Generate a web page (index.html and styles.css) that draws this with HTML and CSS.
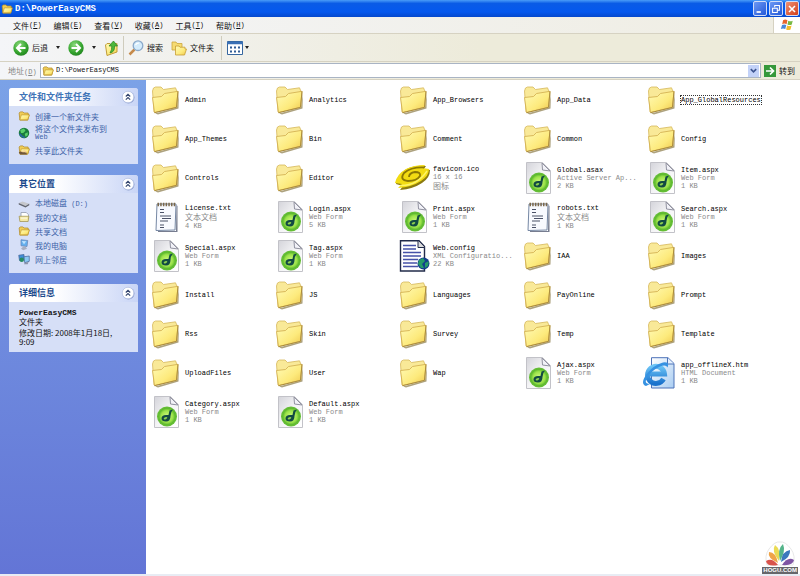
FILE: index.html
```
<!DOCTYPE html>
<html lang="zh-CN">
<head>
<meta charset="utf-8">
<title>D:\PowerEasyCMS</title>
<link rel="stylesheet" href="styles.css">
</head>
<body>
<svg class="defs" aria-hidden="true">
  <defs>
    <linearGradient id="gFold" x1="0" y1="0" x2="1" y2="1"><stop offset="0" stop-color="#fffbb8"/><stop offset=".6" stop-color="#fdea7c"/><stop offset="1" stop-color="#eec64b"/></linearGradient>
    <radialGradient id="gGreen" cx=".4" cy=".3" r=".8"><stop offset="0" stop-color="#8bd97c"/><stop offset=".6" stop-color="#35a52e"/><stop offset="1" stop-color="#1c7a1c"/></radialGradient>
    <radialGradient id="gLime"><stop offset="0" stop-color="#d2fa7e"/><stop offset=".7" stop-color="#9be34a"/><stop offset="1" stop-color="#58b52c"/></radialGradient>
    <linearGradient id="gPage" x1="0" y1="0" x2="1" y2="1"><stop offset="0" stop-color="#d4d4da"/><stop offset=".5" stop-color="#f4f4f6"/><stop offset="1" stop-color="#fff"/></linearGradient>
    <linearGradient id="gIe" x1="0" y1="0" x2="0" y2="1"><stop offset="0" stop-color="#6cc4f6"/><stop offset="1" stop-color="#1a72cc"/></linearGradient>
    <linearGradient id="gDoc" x1="0" y1="0" x2="1" y2="1"><stop offset="0" stop-color="#fff"/><stop offset="1" stop-color="#a9cdf2"/></linearGradient>
  </defs>
  <symbol id="folder" viewBox="0 0 32 32">
    <path d="M5 29.500L27 23.500L29 8L28.500 24.500L8 30.500Z" fill="#8a7a48" opacity=".7"/>
    <path d="M2.500 7L3.500 4L5.500 3H11L13.500 5.500L25.500 3.800L27 7.500V22L4 28Z" fill="#f9e998" stroke="#d6b75c" stroke-width=".8"/>
    <path d="M2.500 13.500L11.500 12.500L14.500 9.500L28 7.300L26.500 23.200L4.500 28.500Z" fill="url(#gFold)" stroke="#cfab4a" stroke-width=".8"/>
    <path d="M4.500 28.700L26.500 23.400L28 7.300" fill="none" stroke="#ab8c3c"/>
  </symbol>
  <symbol id="web" viewBox="0 0 32 32">
    <path d="M4.500 .5H20.500L28.500 8.500V31.500H4.500Z" fill="url(#gPage)" stroke="#c2c2c8"/>
    <path d="M20 1L28 9L20.500 8Z" fill="#f2f2f8" stroke="#9192a0"/>
    <circle cx="17" cy="20.500" r="10" fill="#64bd35"/>
    <circle cx="17" cy="20.500" r="8.400" fill="url(#gLime)"/>
    <path d="M19.500 14.500L23 13.500Q20.500 16 20.500 20Q20.500 25.500 16 25.500Q11.500 25.500 11.500 22.500Q11.500 19 16 19H18.500Z" fill="#124a43"/>
    <ellipse cx="15.500" cy="22.200" rx="1.900" ry="1" fill="#8ed24f" transform="rotate(-20 15.500 22.200)"/>
  </symbol>
  <symbol id="text" viewBox="0 0 32 32">
    <path d="M8 30H26L26.500 4L27.500 5V31H8Z" fill="#777d90"/>
    <path d="M7 3H26L25 29L6 29.500Z" fill="#f8faff" stroke="#7688a4"/>
    <path d="M7.500 3.500H26" stroke="#7b684a" stroke-width="3.500" stroke-dasharray="1.500 1.200"/>
    <path d="M10 8.500H14M10 11.500H14M10 15H21M12 17.500H21M10 20H18M10 24H14M10 26.500H14" stroke="#4b5268" stroke-width="1.200"/>
  </symbol>
  <symbol id="config" viewBox="0 0 32 32">
    <path d="M2.500 .8H21L26.500 6.500V31H2.500Z" fill="#fff" stroke="#222b4a" stroke-width="1.400"/>
    <path d="M20 1V7.500H26.500" fill="#ddd" stroke="#222b4a"/>
    <path d="M5 5.500H18M5 9H18M5 12.500H23M5 16H23M5 19.500H20M5 23H19M5 26.500H20" stroke="#4652a8" stroke-width="1.500"/>
    <circle cx="25.500" cy="23.500" r="6" fill="#123f8d"/>
    <path d="M21 20L25 18L27 21L24 24L26 28L23 28L20 24ZM27 23L31 21L30 26L27 28Z" fill="#259a67"/>
  </symbol>
  <symbol id="ico" viewBox="0 0 36 28">
    <path d="M2 20Q3 12 11 6Q20 1 32 2L30 5L36 6Q36 14 28 19Q19 25 6 26L9 22Z" fill="#8b7a10"/>
    <path d="M1 19Q3 10 12 5Q20 1 31 1L29 4L35 5Q35 12 27 17Q18 23 4 24L8 20Z" fill="#f2dc13"/>
    <path d="M30 3.500Q17 3 10 9Q5 16 14 17Q23 17 26 12Q27 8 21 8Q15 9 15 13" fill="none" stroke="#8b7805" stroke-width="1.800"/>
    <path d="M6 21.500Q23 22 33 7" fill="none" stroke="#fff568" stroke-width="1.400"/>
  </symbol>
  <symbol id="ie" viewBox="0 0 36 32">
    <path d="M9.500 .7H26L32 6.500V31H9.500Z" fill="url(#gDoc)" stroke="#4d72b8"/>
    <path d="M25.500 1V7H32" fill="#e5f1ff" stroke="#4d72b8"/>
    <path d="M21.500 22A8.500 8.500 0 1 1 22.500 17H7" fill="none" stroke="url(#gIe)" stroke-width="5"/>
    <path d="M4 29Q-2 27 4 18Q11 8 21 5.500Q28 4.500 25.500 10.500Q24 7 18 9.500Q9 13.500 4.500 22Q2 27 8 27Z" fill="#3692e2"/>
  </symbol>
  <symbol id="smallfolder" viewBox="0 0 16 16">
    <path d="M1.500 4L3 2.500H6.500L8 4H13.500V6L15 6.500L13 13.500H2.500Z" fill="#f0cd56" stroke="#b18b29"/>
    <path d="M2.500 13L4.500 6.500H15L13 13Z" fill="url(#gFold)" stroke="#bd962e" stroke-width=".8"/>
  </symbol>
  <symbol id="globe" viewBox="0 0 16 16">
    <circle cx="8" cy="8" r="7" fill="#1a7c3c"/>
    <path d="M3 4L8 2L10 5L7 8L4 8ZM9 9L13 7L13 11L10 13Z" fill="#5bd06a"/>
    <path d="M2 9Q5 13 9 14" fill="none" stroke="#2a64a8" stroke-width="2"/>
  </symbol>
  <symbol id="share" viewBox="0 0 16 16">
    <use href="#smallfolder"/>
    <path d="M1 11Q4 9 6 11L11 11L12 14H3Z" fill="#71563a"/>
    <path d="M5 10L9 9L11 11" stroke="#f2c9a0" stroke-width="1.500" fill="none"/>
  </symbol>
  <symbol id="disk" viewBox="0 0 16 16">
    <path d="M1 8L6 6L15 9L10 12Z" fill="#c5c7cc"/>
    <path d="M1 8L10 12V14L1 10ZM10 12L15 9V11L10 14Z" fill="#62656e"/>
  </symbol>
  <symbol id="docs" viewBox="0 0 16 16">
    <path d="M4 2H11L14 5V10H4Z" fill="#fff" stroke="#8c96a8"/>
    <path d="M1.500 7H14.500L13.500 14H2.500Z" fill="#f5e9a4" stroke="#9f9150"/>
    <path d="M4 9.500H12" stroke="#fff"/>
  </symbol>
  <symbol id="pc" viewBox="0 0 16 16">
    <path d="M4 1L13 2L12 10L4 9Z" fill="#65b0ef" stroke="#6985b5"/>
    <path d="M5 2.500L11 3L8 7Z" fill="#bfe3ff"/>
    <path d="M7 10H10L12 13L7 15L4 13Z" fill="#a8aec0"/>
  </symbol>
  <symbol id="net" viewBox="0 0 16 16">
    <path d="M1 3L8 2V9L2 10Z" fill="#3f8ed8" stroke="#456799"/>
    <path d="M8 5L15 4V11L9 13Z" fill="#8ac8f4" stroke="#456799"/>
    <circle cx="5" cy="9" r="3" fill="#278b60"/>
    <path d="M9 13L14 12L13 15H8Z" fill="#8b93a8"/>
  </symbol>
  <symbol id="chev" viewBox="0 0 14 14">
    <circle cx="7.500" cy="7.500" r="6" fill="#8fa0cf"/>
    <circle cx="7" cy="7" r="5.800" fill="#fff" stroke="#b8c4e4" stroke-width=".8"/>
    <path d="M4.800 6.500L7 4.300L9.200 6.500M4.800 9.700L7 7.500L9.200 9.700" fill="none" stroke="#34466f" stroke-width="1.200"/>
  </symbol>
</svg>

<div class="window">
  <header class="titlebar">
    <svg class="i12"><use href="#smallfolder"/></svg>
    <h1>D:\PowerEasyCMS</h1>
    <button class="win" aria-label="最小化"><svg viewBox="0 0 14 14"><path d="M3 10.500H8" stroke="#fff" stroke-width="2"/></svg></button>
    <button class="win" aria-label="还原"><svg viewBox="0 0 14 14"><path d="M5.500 5V3H11V8.500H9M3 6H8.500V11H3Z" fill="none" stroke="#fff" stroke-width="1.200"/></svg></button>
    <button class="win close" aria-label="关闭"><svg viewBox="0 0 14 14"><path d="M3.500 3.500L10.500 10.500M10.500 3.500L3.500 10.500" stroke="#fff" stroke-width="1.800"/></svg></button>
  </header>

  <nav class="menubar">
    <button>文件<span>(<u>F</u>)</span></button>
    <button>编辑<span>(<u>E</u>)</span></button>
    <button>查看<span>(<u>V</u>)</span></button>
    <button>收藏<span>(<u>A</u>)</span></button>
    <button>工具<span>(<u>T</u>)</span></button>
    <button>帮助<span>(<u>H</u>)</span></button>
    <div class="flag"><svg viewBox="0 0 16 16"><path d="M3.500 2.500Q6 1 8.500 2.500L7.500 7Q5 5.700 2.500 7Z" fill="#e8652b"/><path d="M9.500 3Q12 4.300 14.500 3L13.500 7.500Q11 8.700 8.500 7.500Z" fill="#78b943"/><path d="M2.300 8Q4.800 6.800 7.200 8L6 12.500Q3.500 11.300 1 12.500Z" fill="#4a88d8"/><path d="M8.200 8.500Q10.700 9.700 13.200 8.500L12 13Q9.500 14.300 7 13Z" fill="#f4bd2b"/></svg></div>
  </nav>

  <div class="toolbar">
    <button><svg class="i16" viewBox="0 0 16 16"><circle cx="8" cy="8" r="7.700" fill="url(#gGreen)"/><path d="M12.500 8H5M8 4L4 8L8 12" fill="none" stroke="#fff" stroke-width="2"/></svg>后退</button>
    <button class="drop" aria-label="后退列表"><i></i></button>
    <button aria-label="前进"><svg class="i16" viewBox="0 0 16 16"><circle cx="8" cy="8" r="7.700" fill="url(#gGreen)"/><path d="M3.500 8H11M8 4L12 8L8 12" fill="none" stroke="#fff" stroke-width="2"/></svg></button>
    <button class="drop" aria-label="前进列表"><i></i></button>
    <button aria-label="向上"><svg class="i16" viewBox="0 0 16 16"><path d="M1.500 5L3 3.500H6L7 5L13 3.500V12L3 15.500Z" fill="url(#gFold)" stroke="#c19c37"/><path d="M6 13Q11 12 10.500 6H13.500L9.500 1L5 6H7.800Q8 10 6 13Z" fill="#4eb83b" stroke="#28801f" stroke-width=".7"/></svg></button>
    <span class="sep"></span>
    <button><svg class="i16" viewBox="0 0 16 16"><path d="M6.500 9.500L1.500 14.500" stroke="#c58a4b" stroke-width="2.500"/><circle cx="10" cy="5.700" r="4.800" fill="#d4ecfc" stroke="#8aa9ca" stroke-width="1.300"/><path d="M7.500 5Q8.500 3 11 3" stroke="#fff" fill="none" stroke-width="1.200"/></svg>搜索</button>
    <button class="folders"><svg class="i16" viewBox="0 0 16 16"><path d="M1 2H5L6 3.500H11V10H1Z" fill="#f6db72" stroke="#cca63d" stroke-width=".8"/><path d="M4.500 6H8L9 7.200H14V9L15.500 9L13.500 15H4.500Z" fill="url(#gFold)" stroke="#c79d32" stroke-width=".8"/></svg>文件夹</button>
    <span class="sep wide"></span>
    <button aria-label="查看方式"><svg class="i16" viewBox="0 0 16 16"><path d="M.5 1.500H15.500V14.500H.5Z" fill="#fff" stroke="#36679f"/><path d="M0 3H16" stroke="#3a70b5" stroke-width="2.500"/><path d="M3 7.500H5M7 7.500H9M11 7.500H13M3 11.500H5M7 11.500H9M11 11.500H13" stroke="#315d96" stroke-width="2.200"/></svg></button>
    <button class="drop near" aria-label="查看列表"><i></i></button>
  </div>

  <form class="address">
    <label for="addr">地址<span>(<u>D</u>)</span></label>
    <div class="box">
      <svg class="i12"><use href="#smallfolder"/></svg>
      <input id="addr" type="text" value="D:\PowerEasyCMS">
      <button type="button" class="combo" aria-label="展开"><svg viewBox="0 0 10 10"><path d="M2 3.500L5 6.500L8 3.500" fill="none" stroke="#3d5590" stroke-width="1.800"/></svg></button>
    </div>
    <button type="button" class="go"><svg class="i12" viewBox="0 0 12 12"><path d="M0 0H12V12H0Z" fill="#35983a"/><path d="M2 6H9M6 2.500L9.500 6L6 9.500" fill="none" stroke="#fff" stroke-width="1.700"/></svg>转到</button>
  </form>

  <div class="main">
    <aside class="side">
      <section class="panel first">
        <h2>文件和文件夹任务<button aria-label="折叠"><svg><use href="#chev"/></svg></button></h2>
        <ul>
          <li><svg class="i12"><use href="#smallfolder"/></svg><a href="#">创建一个新文件夹</a></li>
          <li><svg class="i12"><use href="#globe"/></svg><a href="#">将这个文件夹发布到<span class="line">Web</span></a></li>
          <li><svg class="i12"><use href="#share"/></svg><a href="#">共享此文件夹</a></li>
        </ul>
      </section>
      <section class="panel">
        <h2>其它位置<button aria-label="折叠"><svg><use href="#chev"/></svg></button></h2>
        <ul>
          <li><svg class="i12"><use href="#disk"/></svg><a href="#">本地磁盘<span> (D:)</span></a></li>
          <li><svg class="i12"><use href="#docs"/></svg><a href="#">我的文档</a></li>
          <li><svg class="i12"><use href="#smallfolder"/></svg><a href="#">共享文档</a></li>
          <li><svg class="i12"><use href="#pc"/></svg><a href="#">我的电脑</a></li>
          <li><svg class="i12"><use href="#net"/></svg><a href="#">网上邻居</a></li>
        </ul>
      </section>
      <section class="panel">
        <h2>详细信息<button aria-label="折叠"><svg><use href="#chev"/></svg></button></h2>
        <div class="details">
          <p><b>PowerEasyCMS</b>文件夹</p>
          <p>修改日期: 2008年1月18日, 9:09</p>
        </div>
      </section>
    </aside>

    <ul class="files">
      <li><svg><use href="#folder"/></svg><p><b>Admin</b></p></li>
      <li><svg><use href="#folder"/></svg><p><b>Analytics</b></p></li>
      <li><svg><use href="#folder"/></svg><p><b>App_Browsers</b></p></li>
      <li><svg><use href="#folder"/></svg><p><b>App_Data</b></p></li>
      <li><svg><use href="#folder"/></svg><p><b class="focus">App_GlobalResources</b></p></li>
      <li><svg><use href="#folder"/></svg><p><b>App_Themes</b></p></li>
      <li><svg><use href="#folder"/></svg><p><b>Bin</b></p></li>
      <li><svg><use href="#folder"/></svg><p><b>Comment</b></p></li>
      <li><svg><use href="#folder"/></svg><p><b>Common</b></p></li>
      <li><svg><use href="#folder"/></svg><p><b>Config</b></p></li>
      <li><svg><use href="#folder"/></svg><p><b>Controls</b></p></li>
      <li><svg><use href="#folder"/></svg><p><b>Editor</b></p></li>
      <li><svg class="broad"><use href="#ico"/></svg><p><b>favicon.ico</b><span>16 x 16</span><span class="zh">图标</span></p></li>
      <li><svg><use href="#web"/></svg><p><b>Global.asax</b><span>Active Server Ap...</span><span>2 KB</span></p></li>
      <li><svg><use href="#web"/></svg><p><b>Item.aspx</b><span>Web Form</span><span>1 KB</span></p></li>
      <li><svg><use href="#text"/></svg><p><b>License.txt</b><span class="zh">文本文档</span><span>4 KB</span></p></li>
      <li><svg><use href="#web"/></svg><p><b>Login.aspx</b><span>Web Form</span><span>5 KB</span></p></li>
      <li><svg><use href="#web"/></svg><p><b>Print.aspx</b><span>Web Form</span><span>1 KB</span></p></li>
      <li><svg><use href="#text"/></svg><p><b>robots.txt</b><span class="zh">文本文档</span><span>1 KB</span></p></li>
      <li><svg><use href="#web"/></svg><p><b>Search.aspx</b><span>Web Form</span><span>1 KB</span></p></li>
      <li><svg><use href="#web"/></svg><p><b>Special.aspx</b><span>Web Form</span><span>1 KB</span></p></li>
      <li><svg><use href="#web"/></svg><p><b>Tag.aspx</b><span>Web Form</span><span>1 KB</span></p></li>
      <li><svg><use href="#config"/></svg><p><b>Web.config</b><span>XML Configuratio...</span><span>22 KB</span></p></li>
      <li><svg><use href="#folder"/></svg><p><b>IAA</b></p></li>
      <li><svg><use href="#folder"/></svg><p><b>Images</b></p></li>
      <li><svg><use href="#folder"/></svg><p><b>Install</b></p></li>
      <li><svg><use href="#folder"/></svg><p><b>JS</b></p></li>
      <li><svg><use href="#folder"/></svg><p><b>Languages</b></p></li>
      <li><svg><use href="#folder"/></svg><p><b>PayOnline</b></p></li>
      <li><svg><use href="#folder"/></svg><p><b>Prompt</b></p></li>
      <li><svg><use href="#folder"/></svg><p><b>Rss</b></p></li>
      <li><svg><use href="#folder"/></svg><p><b>Skin</b></p></li>
      <li><svg><use href="#folder"/></svg><p><b>Survey</b></p></li>
      <li><svg><use href="#folder"/></svg><p><b>Temp</b></p></li>
      <li><svg><use href="#folder"/></svg><p><b>Template</b></p></li>
      <li><svg><use href="#folder"/></svg><p><b>UploadFiles</b></p></li>
      <li><svg><use href="#folder"/></svg><p><b>User</b></p></li>
      <li><svg><use href="#folder"/></svg><p><b>Wap</b></p></li>
      <li><svg><use href="#web"/></svg><p><b>Ajax.aspx</b><span>Web Form</span><span>1 KB</span></p></li>
      <li><svg class="broad"><use href="#ie"/></svg><p><b>app_offlineX.htm</b><span>HTML Document</span><span>1 KB</span></p></li>
      <li><svg><use href="#web"/></svg><p><b>Category.aspx</b><span>Web Form</span><span>1 KB</span></p></li>
      <li><svg><use href="#web"/></svg><p><b>Default.aspx</b><span>Web Form</span><span>1 KB</span></p></li>
    </ul>

    <div class="mark">
      <svg viewBox="0 0 30 26">
        <path d="M2 24Q-1 15 4 8Q10 0 15 1Q20 0 26 8Q31 15 28 24Z" fill="#fff" stroke="#e8e8e8"/>
        <path d="M13 24Q2 26 1 20Q7 16 13 24Z" fill="#d9534c"/>
        <path d="M13 22Q2 17 4 11Q11 11 13 22Z" fill="#efa448"/>
        <path d="M14 20Q6 10 10 4Q16 8 14 20Z" fill="#eadb54"/>
        <path d="M15 20Q12 8 18 3Q21 10 15 20Z" fill="#54b48a"/>
        <path d="M16 21Q17 10 25 9Q26 16 16 21Z" fill="#3b78bd"/>
        <path d="M17 24Q23 15 29 19Q28 25 17 24Z" fill="#7f55a4"/>
      </svg>
      <span>HOGU.COM</span>
    </div>
  </div>
</div>
</body>
</html>
```

FILE: styles.css
```
:root {
  --mono: "Liberation Mono", "Noto Sans CJK SC", monospace;
  --cjk: "Noto Sans CJK SC", sans-serif;
}

* { box-sizing: border-box; }

body {
  margin: 0;
  font: 8px/9px var(--cjk);
  color: #111;
}

h1, h2, p, ul { margin: 0; padding: 0; font-size: inherit; }
ul { list-style: none; }
svg { display: block; flex: none; }
button {
  display: flex;
  align-items: center;
  margin: 0;
  padding: 0;
  border: 0;
  background: none;
  color: inherit;
  font: inherit;
  white-space: nowrap;
}
button span, label span, a span { font: 7px/7px var(--mono); }

.defs { position: absolute; width: 0; height: 0; }
.i12 { width: 12px; height: 12px; }
.i16 { width: 16px; height: 16px; }

.window {
  display: flex;
  flex-direction: column;
  min-height: 100vh;
  border-bottom: 2px solid #e8ecf4;
}

.titlebar {
  display: flex;
  align-items: center;
  gap: 2px;
  height: 17px;
  padding: 0 1px;
  background: linear-gradient(#4a9cf8, #0a5be6 20%, #0558ee 70%, #0548cc);
}
.titlebar h1 {
  flex: 1;
  color: #fff;
  font: bold 9px/12px var(--mono);
}
.win {
  width: 14px;
  height: 15px;
  border: 1px solid #cfdcf8;
  border-radius: 2px;
  background: linear-gradient(135deg, #6c98f4, #2459d8);
}
.win svg { width: 12px; height: 12px; }
.close { background: linear-gradient(135deg, #ef9073, #d2401b); }

.menubar {
  display: flex;
  align-items: center;
  gap: 12px;
  height: 17px;
  padding-left: 13px;
  border-bottom: 1px solid #d6d2c2;
  background: linear-gradient(90deg, #f4f5f8, #efede2);
}
.flag {
  display: flex;
  align-items: center;
  justify-content: center;
  align-self: stretch;
  width: 27px;
  margin-left: auto;
  border-left: 1px solid #d6d2c2;
  background: #fff;
}
.flag svg { width: 14px; height: 14px; }

.toolbar {
  display: flex;
  align-items: center;
  height: 28px;
  padding-left: 13px;
  border-bottom: 1px solid #d6d2c2;
  background: linear-gradient(90deg, #f4f5f8, #edebda 60%);
}
.toolbar button { gap: 3px; }
.drop { justify-content: center; width: 20px; height: 16px; }
.drop.near { width: 8px; }
.drop i {
  border: 2px solid transparent;
  border-top: 3px solid #222;
  border-bottom: 0;
}
.sep {
  width: 1px;
  height: 24px;
  margin: 0 4px 0 3px;
  background: #cfccbd;
}
.sep.wide { margin: 0 5px 0 7px; }
.toolbar .folders { margin-left: 8px; }

.address {
  display: flex;
  align-items: center;
  height: 18px;
  padding: 0 5px 0 8px;
  border-bottom: 1px solid #d6d2c2;
  background: linear-gradient(90deg, #f4f5f8, #edebda 60%);
}
.address label { width: 32px; color: #858585; }
.box {
  display: flex;
  flex: 1;
  align-items: center;
  height: 15px;
  padding: 0 1px;
  border: 1px solid #a9b4c4;
  background: #fff;
}
.box input {
  flex: 1;
  min-width: 0;
  height: 11px;
  margin: 0;
  padding: 0 2px;
  border: 0;
  background: none;
  color: #111;
  font: 7px/11px var(--mono);
}
.combo {
  justify-content: center;
  width: 11px;
  height: 12px;
  background: #c3d2f8;
}
.combo svg { width: 9px; height: 9px; }
.go { gap: 3px; margin-left: 3px; }

.main {
  position: relative;
  display: flex;
  flex: 1;
  background: #fff;
}

.side {
  display: flex;
  flex-direction: column;
  gap: 11px;
  width: 146px;
  padding: 8px 8px 8px 9px;
  background: linear-gradient(#7ba2e7, #6375d6);
}
.panel { background: #d6dff7; border-radius: 3px 3px 0 0; }
.panel h2 {
  display: flex;
  align-items: center;
  justify-content: space-between;
  height: 18px;
  padding: 0 3px 0 10px;
  border-radius: 3px 3px 0 0;
  background: linear-gradient(90deg, #fff 35%, #c9d5f6);
  color: #1c4a8c;
  font: bold 9px/12px var(--cjk);
}
.first h2 { color: #3f74b8; }
.panel h2 svg { width: 14px; height: 14px; }
.panel ul {
  display: flex;
  flex-direction: column;
  gap: 2px;
  padding: 4px 20px 8px 9px;
}
.panel li {
  display: flex;
  align-items: center;
  gap: 5px;
  min-height: 12px;
}
.panel a { color: #3d63a8; text-decoration: none; }
.panel .line { display: block; line-height: 9px; }
.details { padding: 6px 10px; }
.details p + p { margin-top: 2px; }
.details b { display: block; font: bold 8px/9px var(--mono); }

.files {
  display: grid;
  flex: 1;
  grid-template-columns: repeat(auto-fill, 124px);
  grid-auto-rows: 39px;
  align-content: start;
  padding-left: 4px;
}
.files li {
  display: flex;
  align-items: center;
  gap: 3px;
}
.files svg { width: 32px; height: 32px; }
.files .broad { width: 36px; margin-left: -4px; }
.files p {
  color: #8a8a8a;
  font: 7px/8px var(--mono);
  white-space: nowrap;
}
.files b, .files p span { display: block; }
.files b { color: #000; font-weight: normal; }
.files .zh { font: 8px/10px var(--cjk); }
.files .focus { outline: 1px dotted #333; }

.mark {
  position: absolute;
  right: 2px;
  bottom: 0;
  display: flex;
  flex-direction: column;
  align-items: center;
}
.mark svg { width: 30px; height: 26px; }
.mark span {
  padding: 0 1px;
  background: #66666a;
  color: #fff;
  font: bold 6px/7px "Liberation Sans", sans-serif;
}
```
